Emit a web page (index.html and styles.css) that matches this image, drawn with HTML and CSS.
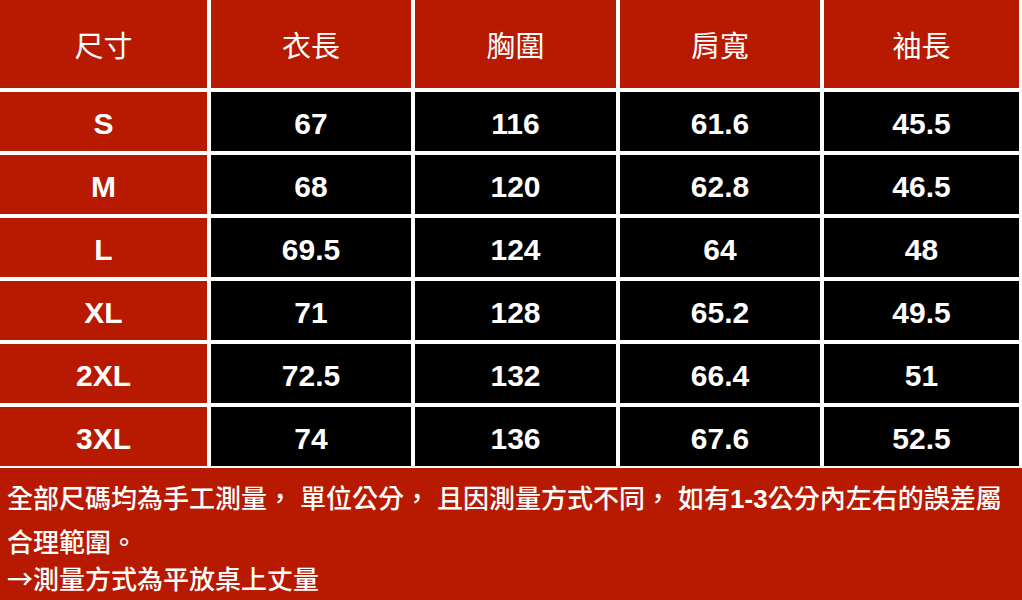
FILE: index.html
```html
<!DOCTYPE html>
<html lang="zh-Hant">
<head>
<meta charset="utf-8">
<link rel="stylesheet" href="styles.css">
</head>
<body>
<div class="chart">
  <div class="grid">
    <div class="cell head">尺寸</div>
    <div class="cell head">衣長</div>
    <div class="cell head">胸圍</div>
    <div class="cell head">肩寬</div>
    <div class="cell head">袖長</div>

    <div class="cell size">S</div>
    <div class="cell val">67</div>
    <div class="cell val">116</div>
    <div class="cell val">61.6</div>
    <div class="cell val">45.5</div>

    <div class="cell size">M</div>
    <div class="cell val">68</div>
    <div class="cell val">120</div>
    <div class="cell val">62.8</div>
    <div class="cell val">46.5</div>

    <div class="cell size">L</div>
    <div class="cell val">69.5</div>
    <div class="cell val">124</div>
    <div class="cell val">64</div>
    <div class="cell val">48</div>

    <div class="cell size">XL</div>
    <div class="cell val">71</div>
    <div class="cell val">128</div>
    <div class="cell val">65.2</div>
    <div class="cell val">49.5</div>

    <div class="cell size">2XL</div>
    <div class="cell val">72.5</div>
    <div class="cell val">132</div>
    <div class="cell val">66.4</div>
    <div class="cell val">51</div>

    <div class="cell size">3XL</div>
    <div class="cell val">74</div>
    <div class="cell val">136</div>
    <div class="cell val">67.6</div>
    <div class="cell val">52.5</div>
  </div>
  <div class="note">
    <p class="note-main">全部尺碼均為手工測量<span class="comma">，</span>單位公分<span class="comma">，</span>且因測量方式不同<span class="comma">，</span>如有<span class="num">1-3</span>公分內左右的誤差屬合理範圍。</p>
    <p class="note-sub">→測量方式為平放桌上丈量</p>
  </div>
</div>
</body>
</html>
```

FILE: styles.css
```css
* { box-sizing: border-box; }
html, body {
  margin: 0;
  padding: 0;
  width: 1022px;
  height: 600px;
  overflow: hidden;
  background: #b71a00;
}
.chart {
  width: 1022px;
  height: 600px;
  display: flex;
  flex-direction: column;
  background: #b71a00;
}
.grid {
  display: grid;
  grid-template-columns: 207px 200px 201px 200px 195px;
  grid-template-rows: 88px repeat(6, 59px);
  gap: 4px;
  background: #ffffff;
  padding: 0 3px 2px 0;
}
.cell {
  display: flex;
  align-items: center;
  justify-content: center;
  color: #ffffff;
}
.head {
  background: #b71a00;
  font-family: "Noto Sans CJK TC", "Noto Sans CJK SC", sans-serif;
  font-size: 29px;
  font-weight: 400;
}
.size {
  background: #b71a00;
  font-family: "Liberation Sans", Arial, sans-serif;
  font-weight: 700;
  font-size: 30px;
  padding-top: 4px;
}
.val {
  background: #000000;
  font-family: "Liberation Sans", Arial, sans-serif;
  font-weight: 700;
  font-size: 30px;
  padding-top: 4px;
}
.note {
  padding: 8px 0 0 7px;
  color: #ffffff;
  font-family: "Noto Sans CJK TC", "Noto Sans CJK SC", sans-serif;
  font-weight: 500;
  font-size: 26px;
}
.note p {
  margin: 0;
}
.note-main {
  line-height: 42px;
}
.note-sub {
  line-height: 32px;
}
.comma {
  margin-right: 7px;
}
.num {
  font-family: "Liberation Sans", Arial, sans-serif;
  font-weight: 700;
}
```
